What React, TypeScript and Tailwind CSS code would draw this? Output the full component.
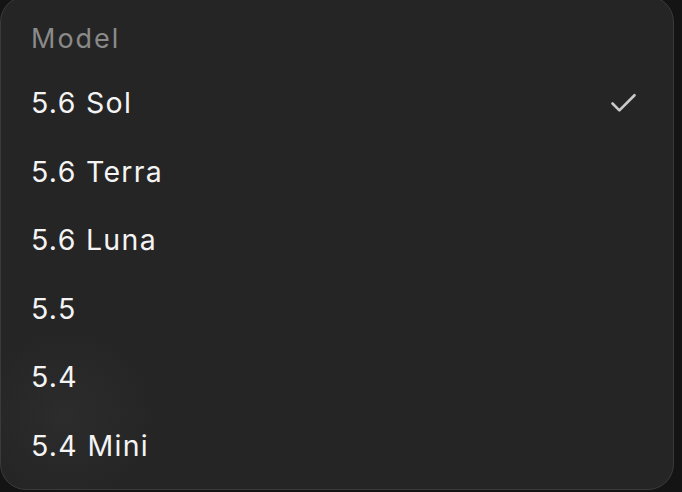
import { Check } from "lucide-react";

const models = [
  { name: "5.6 Sol", selected: true },
  { name: "5.6 Terra" },
  { name: "5.6 Luna" },
  { name: "5.5" },
  { name: "5.4" },
  { name: "5.4 Mini" },
];

export default function App() {
  return (
    <div
      className="w-[682px] h-[492px] bg-[#141414] overflow-hidden"
      style={{ fontFamily: "Inter, 'Noto Sans', sans-serif" }}
    >
      <div className="w-[674px] h-[494px] -mt-[4px] rounded-[26px] border border-[#3a3a3a] bg-[#252525] bg-[radial-gradient(circle_at_66px_418px,#2c2c2c_0px,#252525_90px)] flex flex-col pt-[24px] pl-[30px] pr-[31px]">
        <div className="h-[36px] flex items-center text-[27px] text-[#8a8a8a] tracking-[2px]">
          Model
        </div>
        <div className="flex flex-col pt-[12px]">
          {models.map((m) => (
            <div
              key={m.name}
              className="h-[68.6px] flex items-center justify-between text-[28.5px] text-[#f4f4f4] tracking-[1.3px]"
            >
              <span>{m.name}</span>
              {m.selected && (
                <Check className="w-[33px] h-[33px] text-[#c9c9c9] mr-[2px]" strokeWidth={1.9} />
              )}
            </div>
          ))}
        </div>
      </div>
    </div>
  );
}
